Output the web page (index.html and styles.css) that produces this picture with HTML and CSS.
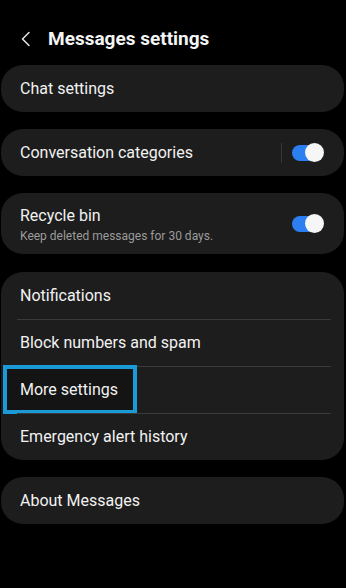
FILE: index.html
```html
<!DOCTYPE html>
<html>
<head>
<meta charset="utf-8">
<link rel="stylesheet" href="styles.css">
</head>
<body>
<div class="screen">
  <header class="header">
    <svg class="back" width="10" height="16" viewBox="0 0 10 16"><path d="M8 1.5 L1.5 8 L8 14.5" fill="none" stroke="#e8e8e8" stroke-width="1.5" stroke-linecap="round" stroke-linejoin="round"/></svg>
    <h1 class="title">Messages settings</h1>
  </header>

  <section class="card">
    <div class="row"><span class="label">Chat settings</span></div>
  </section>

  <section class="card">
    <div class="row">
      <span class="label">Conversation categories</span>
      <span class="vdiv"></span>
      <span class="toggle"><span class="knob"></span></span>
    </div>
  </section>

  <section class="card">
    <div class="row tall">
      <div class="texts">
        <span class="label">Recycle bin</span>
        <span class="sub">Keep deleted messages for 30 days.</span>
      </div>
      <span class="toggle"><span class="knob"></span></span>
    </div>
  </section>

  <section class="card group">
    <div class="row"><span class="label">Notifications</span></div>
    <div class="row sep"><span class="label">Block numbers and spam</span></div>
    <div class="row sep"><span class="label">More settings</span><span class="highlight"></span></div>
    <div class="row sep"><span class="label">Emergency alert history</span></div>
  </section>

  <section class="card">
    <div class="row"><span class="label">About Messages</span></div>
  </section>
</div>
</body>
</html>
```
FILE: styles.css
```css
html, body {
  margin: 0;
  padding: 0;
  background: #000;
}
.screen {
  width: 346px;
  height: 588px;
  background: #000;
  font-family: Roboto, "Noto Sans", sans-serif;
  color: #f2f2f2;
  display: flex;
  flex-direction: column;
  gap: 17px;
  overflow: hidden;
}
.header {
  height: 48px;
  display: flex;
  align-items: flex-end;
  padding-left: 21px;
  gap: 17px;
  box-sizing: border-box;
}
.back {
  display: block;
  margin-bottom: 1px;
}
.title {
  margin: 0;
  font-size: 19px;
  line-height: 19px;
  font-weight: 700;
  color: #f4f4f4;
}
.card {
  margin: 0 2px 0 1px;
  background: #1d1d1d;
  border-radius: 22px;
}
.card.group {
  margin-top: 1px;
}
.row {
  height: 47px;
  display: flex;
  align-items: center;
  padding: 0 21px 0 19px;
  box-sizing: border-box;
  position: relative;
}
.row.tall {
  height: 61px;
}
.row.sep::before {
  content: "";
  position: absolute;
  left: 16px;
  right: 13px;
  top: 0;
  height: 1px;
  background: #3a3a3a;
}
.label {
  font-size: 16px;
  color: #f2f2f2;
  flex: 1;
  position: relative;
  z-index: 1;
}
.texts {
  flex: 1;
  display: flex;
  flex-direction: column;
  gap: 4px;
  padding-top: 2px;
}
.sub {
  font-size: 12px;
  color: #9b9b9b;
}
.vdiv {
  width: 1px;
  height: 20px;
  background: #383838;
  margin-right: 10px;
}
.toggle {
  position: relative;
  width: 31px;
  height: 16px;
  border-radius: 8px;
  background: #2b7ff0;
}
.knob {
  position: absolute;
  right: -1px;
  top: -2px;
  width: 19px;
  height: 19px;
  border-radius: 50%;
  background: #f6f6f6;
}
.highlight {
  position: absolute;
  left: 2px;
  top: -1px;
  width: 126px;
  height: 41px;
  border: 4px solid #1b9ad8;
  background: #141414;
  z-index: 0;
}
```
